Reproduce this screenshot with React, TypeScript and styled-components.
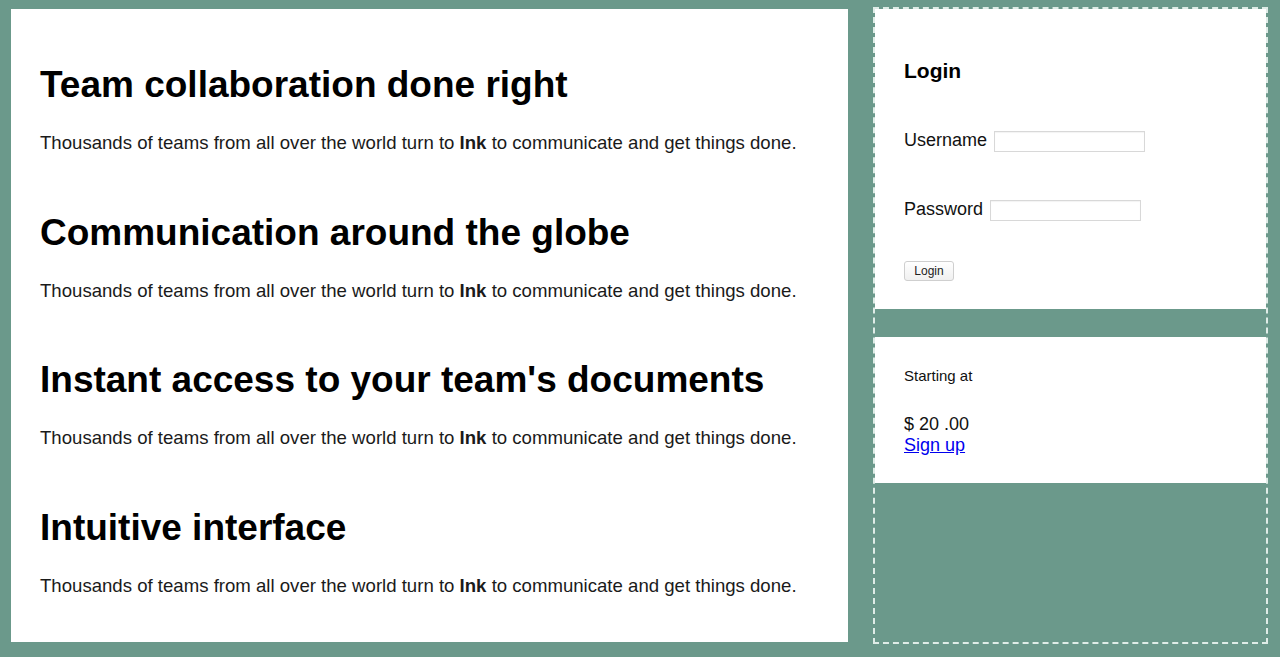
import * as React from 'react';
import styled, { createGlobalStyle } from 'styled-components';

const GlobalStyle = createGlobalStyle`
  html, body {
    margin: 0;
    padding: 0;
    background: #6b998b;
  }
  body {
    font-family: 'Liberation Sans', Arial, Helvetica, sans-serif;
    color: #111;
  }
`;

const Page = styled.div`
  display: flex;
  align-items: flex-start;
  gap: 25px;
  height: 657px;
  box-sizing: border-box;
  padding: 7px 12px 13px 11px;
`;

const Main = styled.main`
  width: 837px;
  height: 633px;
  margin-top: 2px;
  box-sizing: border-box;
  background: #fff;
  padding: 55px 0 0 29px;
`;

const Feature = styled.section`
  margin-bottom: 57.5px;
`;

const Heading = styled.h2`
  margin: 0 0 27px 0;
  font-size: 37px;
  line-height: 41px;
  font-weight: bold;
  color: #000;
`;

const Text = styled.p`
  margin: 0;
  font-size: 18.6px;
  line-height: 22px;
  color: #1a1a1a;
`;

const Aside = styled.aside`
  width: 395px;
  height: 637px;
  box-sizing: border-box;
  border: 2px dashed #dfece7;
  display: flex;
  flex-direction: column;
  gap: 28px;
`;

const Card = styled.div<{ height: number }>`
  background: #fff;
  height: ${({ height }) => height}px;
  box-sizing: border-box;
  padding: 0 0 0 29px;
  display: flex;
  flex-direction: column;
`;

const CardTitle = styled.h3`
  margin: 50px 0 0 0;
  font-size: 21px;
  line-height: 24px;
  font-weight: bold;
  color: #000;
`;

const Field = styled.label<{ top: number }>`
  display: flex;
  align-items: center;
  gap: 7px;
  margin-top: ${({ top }) => top}px;
  font-size: 18px;
  line-height: 22px;
`;

const Input = styled.input`
  width: 151px;
  height: 21px;
  box-sizing: border-box;
  border: 1px solid #d8d8d8;
  box-shadow: inset 0 1px 1px rgba(0, 0, 0, 0.05);
  padding: 0 4px;
  margin-top: 3px;
`;

const Button = styled.button`
  align-self: flex-start;
  margin-top: 40px;
  width: 50px;
  height: 20px;
  padding: 0;
  font-family: 'Liberation Sans', Arial, sans-serif;
  font-size: 12px;
  color: #222;
  background: linear-gradient(#fff, #f0f0f0);
  border: 1px solid #cfcfcf;
  border-radius: 3px;
`;

const Small = styled.div`
  margin-top: 30px;
  font-size: 15px;
  line-height: 18px;
`;

const Price = styled.div`
  margin-top: 29px;
  font-size: 18px;
  line-height: 21px;
`;

const SignUp = styled.a`
  font-size: 18px;
  line-height: 21px;
  color: #0000ee;
  text-decoration: underline;
  align-self: flex-start;
`;

const features = [
  'Team collaboration done right',
  'Communication around the globe',
  "Instant access to your team's documents",
  'Intuitive interface',
];

export default function App() {
  return (
    <>
      <GlobalStyle />
      <Page>
        <Main>
          {features.map(title => (
            <Feature key={title}>
              <Heading>{title}</Heading>
              <Text>
                Thousands of teams from all over the world turn to <b>Ink</b> to communicate and get things done.
              </Text>
            </Feature>
          ))}
        </Main>
        <Aside>
          <Card height={300}>
            <CardTitle>Login</CardTitle>
            <Field top={45}>
              Username <Input type="text" />
            </Field>
            <Field top={45}>
              Password <Input type="password" />
            </Field>
            <Button>Login</Button>
          </Card>
          <Card height={146}>
            <Small>Starting at</Small>
            <Price>$ 20 .00</Price>
            <SignUp href="#">Sign up</SignUp>
          </Card>
        </Aside>
      </Page>
    </>
  );
}
